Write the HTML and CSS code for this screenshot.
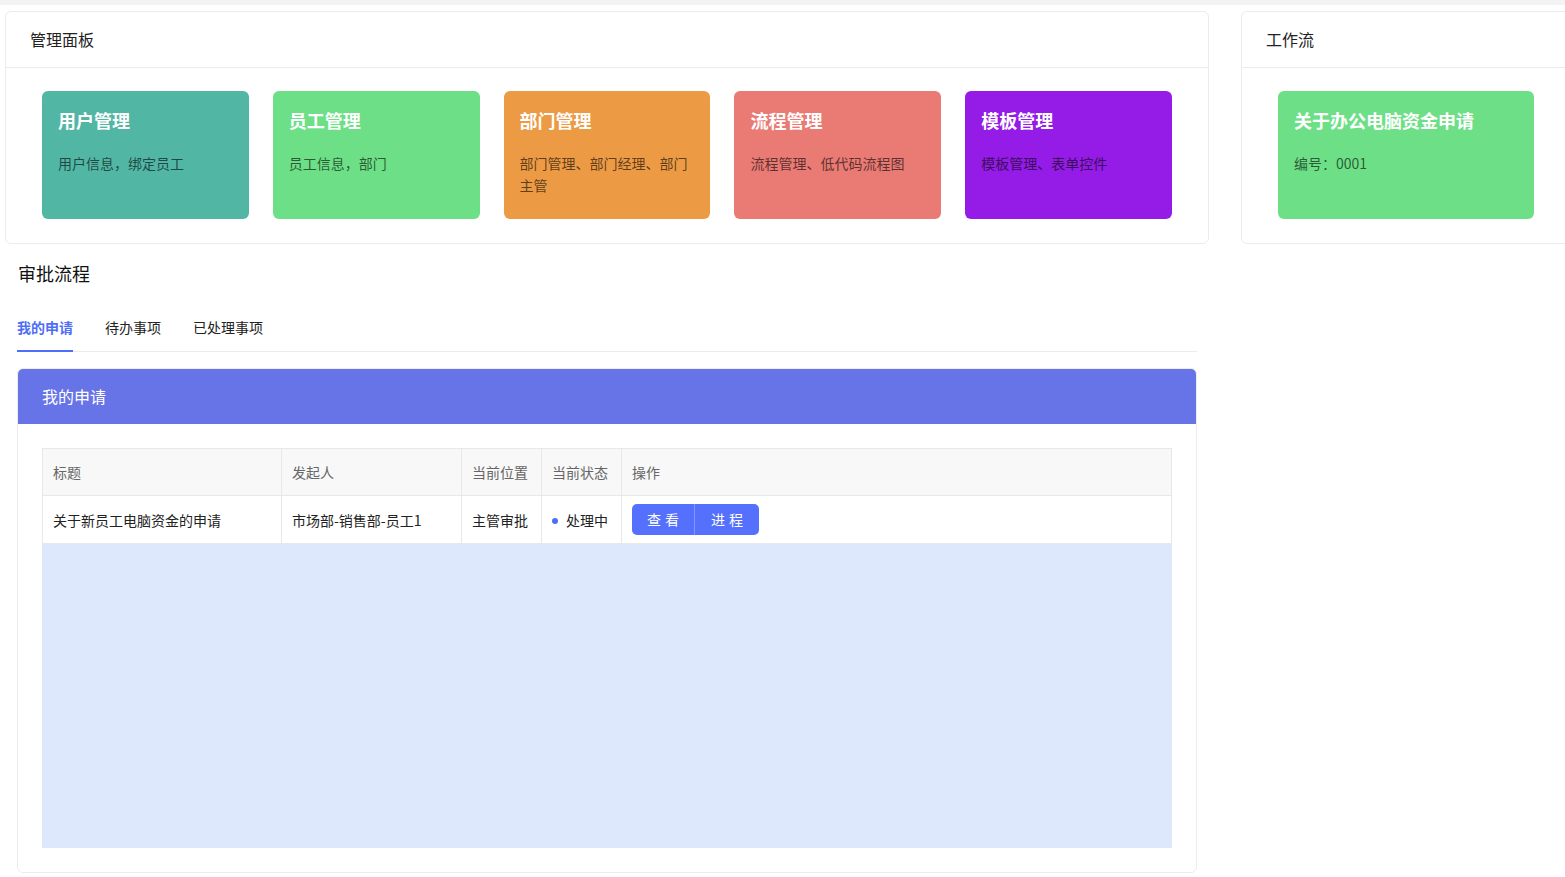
FILE: index.html
```html
<!DOCTYPE html>
<html lang="zh-CN">
<head>
<meta charset="utf-8">
<title>管理面板</title>
<link rel="stylesheet" href="styles.css">
</head>
<body>
<div class="topbar"></div>
<main class="page">
  <div class="top-row">
    <section class="card card-main">
      <header class="card-head">管理面板</header>
      <div class="card-body tiles">
        <div class="tile teal"><div class="tile-title">用户管理</div><div class="tile-desc">用户信息，绑定员工</div></div>
        <div class="tile green"><div class="tile-title">员工管理</div><div class="tile-desc">员工信息，部门</div></div>
        <div class="tile orange"><div class="tile-title">部门管理</div><div class="tile-desc">部门管理、部门经理、部门主管</div></div>
        <div class="tile salmon"><div class="tile-title">流程管理</div><div class="tile-desc">流程管理、低代码流程图</div></div>
        <div class="tile purple"><div class="tile-title">模板管理</div><div class="tile-desc">模板管理、表单控件</div></div>
      </div>
    </section>
    <section class="card card-side">
      <header class="card-head">工作流</header>
      <div class="card-body">
        <div class="tile green wide"><div class="tile-title">关于办公电脑资金申请</div><div class="tile-desc">编号：0001</div></div>
      </div>
    </section>
  </div>

  <section class="approval">
    <h2 class="section-title">审批流程</h2>
    <nav class="tabs">
      <span class="tab active">我的申请</span>
      <span class="tab">待办事项</span>
      <span class="tab">已处理事项</span>
    </nav>
    <div class="panel">
      <div class="panel-head">我的申请</div>
      <div class="panel-body">
        <table class="grid">
          <colgroup>
            <col class="c1"><col class="c2"><col class="c3"><col class="c4"><col>
          </colgroup>
          <thead>
            <tr><th>标题</th><th>发起人</th><th>当前位置</th><th>当前状态</th><th>操作</th></tr>
          </thead>
          <tbody>
            <tr>
              <td>关于新员工电脑资金的申请</td>
              <td>市场部-销售部-员工1</td>
              <td>主管审批</td>
              <td><span class="dot"></span>处理中</td>
              <td><span class="btn-group"><span class="btn">查看</span><span class="btn">进程</span></span></td>
            </tr>
          </tbody>
        </table>
        <div class="empty-area"></div>
      </div>
    </div>
  </section>
</main>
</body>
</html>
```
FILE: styles.css
```css
html, body {
  margin: 0;
  padding: 0;
  background: #ffffff;
  overflow-x: hidden;
}
body {
  font-family: "Noto Sans CJK SC", "Noto Sans", "Liberation Sans", sans-serif;
  color: #222;
  font-size: 14px;
}
.topbar {
  height: 5px;
  background: #f3f3f3;
}
.page {
  padding: 6px 0 0 5px;
}
.top-row {
  display: flex;
  gap: 32px;
  width: 1570px;
}
.card {
  border: 1px solid #ececec;
  border-radius: 6px;
  background: #fff;
  box-sizing: border-box;
  flex-shrink: 0;
}
.card-main { width: 1204px; }
.card-side { width: 330px; }
.card-head {
  height: 55px;
  line-height: 54px;
  padding-left: 24px;
  font-size: 16px;
  color: #222;
  border-bottom: 1px solid #ececec;
}
.card-body {
  padding: 23px 36px 24px;
}
.tiles {
  display: flex;
  gap: 24px;
}
.tile {
  flex: 1;
  height: 128px;
  border-radius: 6px;
  box-sizing: border-box;
  padding: 16px 16px 0;
}
.tile.wide { width: 256px; }
.tile-title {
  font-size: 18px;
  font-weight: 700;
  line-height: 26px;
  color: #fff;
}
.tile-desc {
  margin-top: 19px;
  font-size: 14px;
  line-height: 22px;
  color: rgba(0, 0, 0, 0.62);
}
.teal { background: #52b6a5; }
.green { background: #6ddf86; }
.orange { background: #ed9a45; }
.salmon { background: #e97a74; }
.purple { background: #941ce6; }

.approval {
  margin-left: 12px;
  width: 1180px;
}
.section-title {
  margin: 16px 0 0 1px;
  font-size: 18px;
  font-weight: 400;
  line-height: 26px;
  color: #111;
}
.tabs {
  display: flex;
  gap: 32px;
  margin-top: 29px;
  border-bottom: 1px solid #ececec;
}
.tab {
  font-size: 14px;
  line-height: 22px;
  padding-top: 1px;
  padding-bottom: 12px;
  color: #222;
  border-bottom: 2px solid transparent;
  margin-bottom: -1px;
}
.tab.active {
  color: #4f6ef7;
  font-weight: 600;
  border-bottom-color: #4f6ef7;
}
.panel {
  margin-top: 16px;
  border: 1px solid #ececec;
  border-radius: 6px;
  overflow: hidden;
}
.panel-head {
  height: 55px;
  line-height: 55px;
  background: #6774e8;
  color: #fff;
  font-size: 16px;
  padding-left: 24px;
}
.panel-body {
  padding: 24px 24px 24px;
}
.grid {
  width: 1130px;
  border-collapse: collapse;
  table-layout: fixed;
  border: 1px solid #e8e8e8;
}
.c1 { width: 239px; }
.c2 { width: 180px; }
.c3 { width: 80px; }
.c4 { width: 80px; }
.grid th, .grid td {
  border: 1px solid #e8e8e8;
  padding: 0 10px;
  text-align: left;
  font-size: 14px;
  white-space: nowrap;
}
.grid th {
  height: 46px;
  background: #f8f8f8;
  color: #666;
  font-weight: 400;
}
.grid td {
  height: 47px;
  color: #222;
}
.dot {
  display: inline-block;
  width: 6px;
  height: 6px;
  border-radius: 50%;
  background: #4f6ef7;
  margin: 0 8px 2px 0;
  vertical-align: middle;
}
.btn-group {
  display: inline-flex;
  height: 31px;
  border-radius: 5px;
  overflow: hidden;
  background: #5470fd;
  vertical-align: middle;
}
.btn {
  width: 62px;
  line-height: 31px;
  text-align: center;
  color: #fff;
  letter-spacing: 4px;
  text-indent: 4px;
  font-size: 14px;
}
.btn + .btn {
  width: 64px;
  border-left: 1px solid rgba(255, 255, 255, 0.28);
}
.empty-area {
  height: 304px;
  width: 1130px;
  background: #dde8fc;
}
```
